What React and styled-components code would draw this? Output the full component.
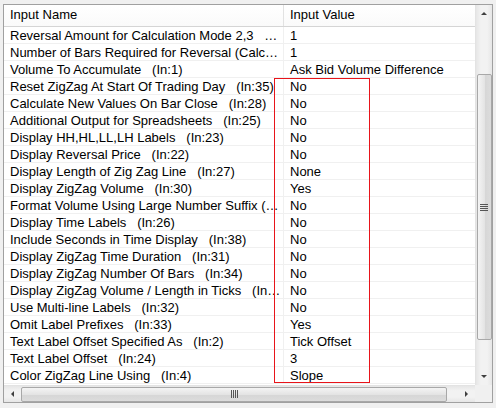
import React from 'react';
import styled, { createGlobalStyle } from 'styled-components';

const GlobalStyle = createGlobalStyle`
  html, body { margin: 0; padding: 0; background: #f0f0f0; }
  body { font-family: "Liberation Sans", Arial, sans-serif; font-size: 13px; color: #000; }
`;

const inputs = [
  ['Reversal Amount for Calculation Mode 2,3   (In:0)', '1'],
  ['Number of Bars Required for Reversal (Calculation Mode 4)   (In:5)', '1'],
  ['Volume To Accumulate   (In:1)', 'Ask Bid Volume Difference'],
  ['Reset ZigZag At Start Of Trading Day   (In:35)', 'No'],
  ['Calculate New Values On Bar Close   (In:28)', 'No'],
  ['Additional Output for Spreadsheets   (In:25)', 'No'],
  ['Display HH,HL,LL,LH Labels   (In:23)', 'No'],
  ['Display Reversal Price   (In:22)', 'No'],
  ['Display Length of Zig Zag Line   (In:27)', 'None'],
  ['Display ZigZag Volume   (In:30)', 'Yes'],
  ['Format Volume Using Large Number Suffix (K, M, B)   (In:29)', 'No'],
  ['Display Time Labels   (In:26)', 'No'],
  ['Include Seconds in Time Display   (In:38)', 'No'],
  ['Display ZigZag Time Duration   (In:31)', 'No'],
  ['Display ZigZag Number Of Bars   (In:34)', 'No'],
  ['Display ZigZag Volume / Length in Ticks   (In:36)', 'No'],
  ['Use Multi-line Labels   (In:32)', 'No'],
  ['Omit Label Prefixes   (In:33)', 'Yes'],
  ['Text Label Offset Specified As   (In:2)', 'Tick Offset'],
  ['Text Label Offset   (In:24)', '3'],
  ['Color ZigZag Line Using   (In:4)', 'Slope'],
];

const Frame = styled.div`
  position: relative;
  margin: 4px 3px 0 3px;
  width: 488px;
  height: 397px;
  border: 1px solid #a0a0a0;
  background: #fff;
  display: grid;
  grid-template-columns: 1fr 17px;
  grid-template-rows: 1fr 17px;
  overflow: hidden;
`;

const Viewport = styled.div`
  overflow: hidden;
  display: flex;
  flex-direction: column;
`;

const Row = styled.div`
  display: grid;
  grid-template-columns: 280px 200px;
  height: ${p => (p.$header ? 22 : 17)}px;
  flex: none;
  border-bottom: 1px solid ${p => (p.$header ? '#d5d5d5' : '#f0f0f0')};
  box-sizing: border-box;
  background: ${p => (p.$header ? 'linear-gradient(#ffffff, #fafafa)' : '#fff')};
`;

const Cell = styled.div`
  padding: ${p => (p.$header ? 0 : 1)}px 2px 0 ${p => (p.$first ? 6 : 6)}px;
  line-height: ${p => (p.$header ? 20 : 16)}px;
  white-space: pre;
  overflow: hidden;
  text-overflow: ellipsis;
  border-right: 1px solid ${p => (p.$header ? '#e2e2e2' : '#f0f0f0')};
`;

const VScroll = styled.div`
  background: linear-gradient(to right, #e6e6e6, #f2f2f2 30%, #f2f2f2 70%, #e6e6e6);
  border-left: 1px solid #e3e3e3;
  display: flex;
  flex-direction: column;
  align-items: center;
`;

const HScroll = styled.div`
  background: linear-gradient(#e6e6e6, #f2f2f2 30%, #f2f2f2 70%, #e6e6e6);
  border-top: 1px solid #e3e3e3;
  display: flex;
  align-items: center;
`;

const Corner = styled.div`
  background: #f0f0f0;
`;

const ArrowBox = styled.div`
  width: 17px;
  height: 17px;
  flex: none;
  display: flex;
  align-items: center;
  justify-content: center;
`;

const Thumb = styled.div`
  box-sizing: border-box;
  border: 1px solid #a8a8a8;
  border-radius: 2px;
  display: flex;
  align-items: center;
  justify-content: center;
  ${p => p.$vertical
    ? `width: 15px; height: 266px; margin-top: 52px; background: linear-gradient(to right, #f4f4f4, #e4e4e4 50%, #d6d6d6 51%, #dcdcdc);`
    : `height: 15px; width: 426px; background: linear-gradient(#f4f4f4, #e4e4e4 50%, #d6d6d6 51%, #dcdcdc);`}
`;

const Spacer = styled.div`
  flex: 1;
`;

const Highlight = styled.div`
  position: absolute;
  left: 270px;
  top: 73px;
  width: 96px;
  height: 305px;
  border: 1px solid #e8141a;
  box-sizing: border-box;
  pointer-events: none;
`;

function Arrow({ dir }) {
  const pts = {
    up: '1,4 4,1 7,4',
    down: '1,1 4,4 7,1',
    left: '4,1 1,4 4,7',
    right: '1,1 4,4 1,7',
  }[dir];
  const vert = dir === 'up' || dir === 'down';
  return (
    <svg width={vert ? 8 : 5} height={vert ? 5 : 8} viewBox={vert ? '0 0 8 5' : '0 0 5 8'}>
      <polygon points={pts} fill="#404040" />
    </svg>
  );
}

function Grip({ vertical }) {
  return (
    <svg width={vertical ? 8 : 7} height={vertical ? 7 : 8}>
      {[0, 2, 4, 6].map(i =>
        vertical
          ? <line key={i} x1="0" x2="8" y1={i + 0.5} y2={i + 0.5} stroke="#555" strokeWidth="1" />
          : <line key={i} y1="0" y2="8" x1={i + 0.5} x2={i + 0.5} stroke="#555" strokeWidth="1" />
      )}
    </svg>
  );
}

export default function App() {
  return (
    <>
      <GlobalStyle />
      <Frame>
        <Viewport>
          <Row $header>
            <Cell $first $header>Input Name</Cell>
            <Cell $header>Input Value</Cell>
          </Row>
          {inputs.map(([name, value]) => (
            <Row key={name}>
              <Cell $first>{name}</Cell>
              <Cell>{value}</Cell>
            </Row>
          ))}
        </Viewport>
        <VScroll>
          <ArrowBox><Arrow dir="up" /></ArrowBox>
          <Thumb $vertical><Grip vertical /></Thumb>
          <Spacer />
          <ArrowBox><Arrow dir="down" /></ArrowBox>
        </VScroll>
        <HScroll>
          <ArrowBox><Arrow dir="left" /></ArrowBox>
          <Thumb><Grip /></Thumb>
          <Spacer />
          <ArrowBox><Arrow dir="right" /></ArrowBox>
        </HScroll>
        <Corner />
        <Highlight />
      </Frame>
    </>
  );
}
